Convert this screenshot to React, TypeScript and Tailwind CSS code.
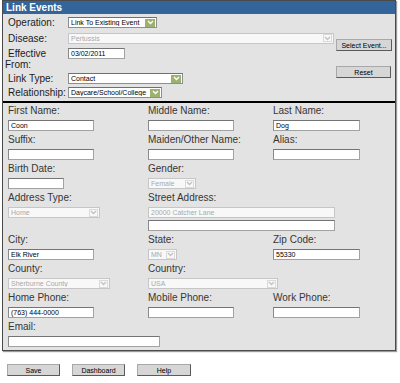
import React from "react";

const Chevron = ({ color }: { color: string }) => (
  <svg width="7" height="5" viewBox="0 0 7 5">
    <path d="M1 1l2.5 2.5L6 1" stroke={color} strokeWidth="1.4" fill="none" />
  </svg>
);

interface SelectProps {
  value: string;
  className: string;
  disabled?: boolean;
}

const Select: React.FC<SelectProps> = ({ value, className, disabled }) => (
  <div
    className={`flex h-[11px] items-center border ${
      disabled
        ? "border-[#c6c6c6] bg-[#f8f8f8] text-[#a9a9a9]"
        : "border-[#8e8e8e] border-t-[#707070] bg-white text-black"
    } ${className}`}
  >
    <span className="flex-1 truncate pl-[2px] text-[7px] leading-none">{value}</span>
    {disabled ? (
      <span className="mr-[1px] flex h-[8px] w-[9px] items-center justify-center border border-[#dadada]">
        <Chevron color="#c2c2c2" />
      </span>
    ) : (
      <span className="mr-[1px] flex h-[8px] w-[10px] items-center justify-center bg-[#9cb06f]">
        <Chevron color="#ffffff" />
      </span>
    )}
  </div>
);

const Input = ({
  value,
  className,
  muted,
}: {
  value?: string;
  className: string;
  muted?: boolean;
}) => (
  <div
    className={`flex h-[11px] items-center border pl-[2px] text-[7px] leading-none ${
      muted
        ? "border-[#c6c6c6] bg-[#f8f8f8] text-[#a9a9a9]"
        : "border-[#a2a2a2] border-t-[#747474] border-l-[#8a8a8a] bg-white text-black"
    } ${className}`}
  >
    {value}
  </div>
);

const Button = ({ children, className }: { children: React.ReactNode; className: string }) => (
  <div
    className={`flex h-[12px] items-center justify-center border border-[#a8a8a8] border-b-[#5a5a5a] border-r-[#5a5a5a] bg-[#d6d6d6] text-[7px] leading-none text-black ${className}`}
  >
    {children}
  </div>
);

const TopRow = ({ h, label, children }: { h: string; label: string; children: React.ReactNode }) => (
  <div className={`flex items-center ${h}`}>
    <div className="w-[65px] pl-[5px] text-[10px] leading-[11px] text-[#1c1c1c]">{label}</div>
    {children}
  </div>
);

const Field = ({ label, children }: { label: string; children: React.ReactNode }) => (
  <div className="mb-[2px]">
    <div className="mb-[2px] h-[14px] text-[10px] leading-[14px] text-[#363636]">{label}</div>
    {children}
  </div>
);

export default function App() {
  return (
    <div className="min-h-[383px] w-[400px] bg-white font-['Liberation_Sans',Arial,sans-serif]">
      <div className="ml-[2px] w-[394px] border border-[#4a4a4a] shadow-[1px_1px_1px_#9a9a9a]">
        <div className="h-[13px] bg-[#33659b] pl-[3px] text-[10px] font-bold leading-[13px] text-white">
          Link Events
        </div>

        {/* top form */}
        <div className="flex bg-[#e3e3e3]">
          <div className="w-[333px] pb-[2px]">
            <TopRow h="h-[17px]" label="Operation:">
              <Select className="w-[89px]" value="Link To Existing Event" />
            </TopRow>
            <TopRow h="h-[14px]" label="Disease:">
              <Select className="w-[266px]" value="Pertussis" disabled />
            </TopRow>
            <div className="flex h-[26px] items-start">
              <div className="w-[65px] pl-[2px] pt-[3px] indent-[3px] text-[10px] leading-[11px] text-[#1c1c1c]">
                Effective From:
              </div>
              <Input className="mt-[3px] w-[57px]" value="03/02/2011" />
            </div>
            <TopRow h="h-[15px]" label="Link Type:">
              <Select className="w-[115px]" value="Contact" />
            </TopRow>
            <TopRow h="h-[13px]" label="Relationship:">
              <Select className="w-[94px]" value="Daycare/School/College" />
            </TopRow>
          </div>
          <div className="flex flex-col gap-[15px] pt-[25px]">
            <Button className="w-[56px]">Select Event...</Button>
            <Button className="w-[55px]">Reset</Button>
          </div>
        </div>

        {/* person details */}
        <div className="border-t-2 border-black bg-[#e3e3e3] pb-[1px] pl-[5px] pt-[1px]">
          <div className="grid grid-cols-[140px_125px_1fr]">
            <Field label="First Name:">
              <Input className="w-[86px]" value="Coon" />
            </Field>
            <Field label="Middle Name:">
              <Input className="w-[86px]" />
            </Field>
            <Field label="Last Name:">
              <Input className="w-[87px]" value="Dog" />
            </Field>

            <Field label="Suffix:">
              <Input className="w-[86px]" />
            </Field>
            <Field label="Maiden/Other Name:">
              <Input className="w-[86px]" />
            </Field>
            <Field label="Alias:">
              <Input className="w-[87px]" />
            </Field>

            <Field label="Birth Date:">
              <Input className="w-[56px]" />
            </Field>
            <Field label="Gender:">
              <Select className="w-[48px]" value="Female" disabled />
            </Field>
            <div />

            <Field label="Address Type:">
              <Select className="w-[92px]" value="Home" disabled />
            </Field>
            <Field label="Street Address:">
              <Input className="w-[187px]" value="20000 Catcher Lane" muted />
              <Input className="mt-[2px] w-[187px]" />
            </Field>
            <div />

            <Field label="City:">
              <Input className="w-[86px]" value="Elk River" />
            </Field>
            <Field label="State:">
              <Select className="w-[29px]" value="MN" disabled />
            </Field>
            <Field label="Zip Code:">
              <Input className="w-[87px]" value="55330" />
            </Field>

            <Field label="County:">
              <Select className="w-[102px]" value="Sherburne County" disabled />
            </Field>
            <Field label="Country:">
              <Select className="w-[130px]" value="USA" disabled />
            </Field>
            <div />

            <Field label="Home Phone:">
              <Input className="w-[86px]" value="(763) 444-0000" />
            </Field>
            <Field label="Mobile Phone:">
              <Input className="w-[86px]" />
            </Field>
            <Field label="Work Phone:">
              <Input className="w-[87px]" />
            </Field>

            <Field label="Email:">
              <Input className="w-[152px]" />
            </Field>
          </div>
        </div>
      </div>

      <div className="mt-[13px] flex gap-[12px] pl-[7px]">
        <Button className="w-[53px]">Save</Button>
        <Button className="w-[53px]">Dashboard</Button>
        <Button className="w-[54px]">Help</Button>
      </div>
    </div>
  );
}
